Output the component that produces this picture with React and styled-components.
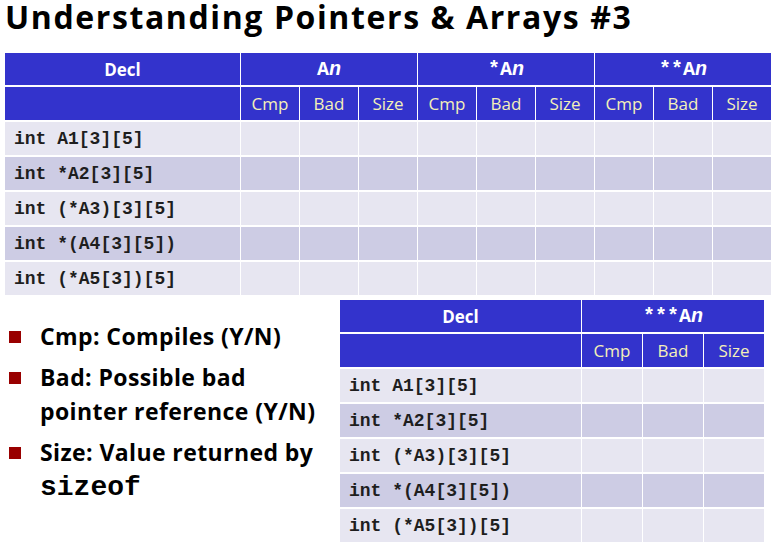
import styled, { createGlobalStyle } from "styled-components";

const GlobalStyle = createGlobalStyle`
  body {
    margin: 0;
    background: #fff;
    font-family: "Open Sans", Lato, sans-serif;
  }
`;

const decls = [
  "int A1[3][5]",
  "int *A2[3][5]",
  "int (*A3)[3][5]",
  "int *(A4[3][5])",
  "int (*A5[3])[5]",
];

const groups = ["", "*", "**"];
const subs = ["Cmp", "Bad", "Size"];

/// slide page
const Page = styled.div`
  width: 774px;
  height: 547px;
  padding: 0 0 0 5px;
  box-sizing: border-box;
  overflow: hidden;
`;

const Title = styled.h1`
  margin: -5px 0 0;
  height: 58px;
  font-family: "Open Sans", sans-serif;
  font-weight: 700;
  font-size: 32px;
  line-height: 44px;
  letter-spacing: 1.6px;
  color: #000;
  white-space: nowrap;
`;

const Table = styled.div`
  display: grid;
  grid-template-columns: ${(p) => p.$decl}px repeat(${(p) => p.$cols}, ${(p) => p.$col}px);
  grid-auto-rows: 33px;
  grid-template-rows: 32px;
  gap: 2px 1px;
  background: #fff;
  width: max-content;
`;

const HeadCell = styled.div`
  background: #3333cc;
  display: flex;
  align-items: center;
  justify-content: center;
  grid-column: ${(p) => (p.$span ? `span ${p.$span}` : "auto")};
  color: #fff;
  font-family: "Open Sans", sans-serif;
  font-weight: 700;
  font-size: 17px;
`;

const SubCell = styled(HeadCell)`
  color: #f4f0b8;
  font-weight: 400;
  font-size: 17px;
`;

const Mono = styled.span`
  font-family: "Liberation Mono", monospace;
  font-weight: 700;
  font-size: 20px;
  white-space: pre;
`;

const Cell = styled.div`
  background: ${(p) => (p.$dark ? "#cdcce4" : "#e7e6f1")};
  display: flex;
  align-items: center;
  padding-left: ${(p) => (p.$code ? "9px" : "0")};
  font-family: "Liberation Mono", monospace;
  font-weight: 700;
  font-size: 18px;
  color: #1e1e1e;
  white-space: pre;
`;

const Bottom = styled.div`
  display: flex;
  margin-top: 5px;
`;

const Bullets = styled.ul`
  list-style: none;
  margin: 0;
  padding: 19px 10px 0 0;
  width: 335px;
  box-sizing: border-box;
`;

const Bullet = styled.li`
  position: relative;
  padding-left: 35px;
  margin-bottom: 7px;
  font-weight: 700;
  font-size: 23px;
  line-height: 34px;
  letter-spacing: 0.4px;
  color: #000;

  &::before {
    content: "";
    position: absolute;
    left: 4px;
    top: 12px;
    width: 12px;
    height: 12px;
    background: #990000;
  }
`;

const Code = styled.span`
  font-family: "Liberation Mono", monospace;
  font-weight: 700;
  font-size: 28px;
  letter-spacing: 0;
`;

const DeclTable = ({ names, decl, col }) => (
  <Table $decl={decl} $col={col} $cols={names.length * 3}>
    <HeadCell>Decl</HeadCell>
    {names.map((n) => (
      <HeadCell key={n} $span={3}>
        <Mono>
          {n}A<i>n</i>
        </Mono>
      </HeadCell>
    ))}
    <HeadCell />
    {names.map((n) =>
      subs.map((s) => <SubCell key={n + s}>{s}</SubCell>)
    )}
    {decls.map((d, i) => [
      <Cell key={d} $code $dark={i % 2 === 1}>
        {d}
      </Cell>,
      ...names.map((n) =>
        subs.map((s) => <Cell key={d + n + s} $dark={i % 2 === 1} />)
      ),
    ])}
  </Table>
);

export default function App() {
  return (
    <>
      <GlobalStyle />
      <Page>
        <Title>Understanding Pointers &amp; Arrays #3</Title>
        <DeclTable names={groups} decl={235} col={58} />
        <Bottom>
          <Bullets>
            <Bullet>Cmp: Compiles (Y/N)</Bullet>
            <Bullet>Bad: Possible bad pointer reference (Y/N)</Bullet>
            <Bullet>
              Size: Value returned by <Code>sizeof</Code>
            </Bullet>
          </Bullets>
          <DeclTable names={["***"]} decl={241} col={60} />
        </Bottom>
      </Page>
    </>
  );
}
